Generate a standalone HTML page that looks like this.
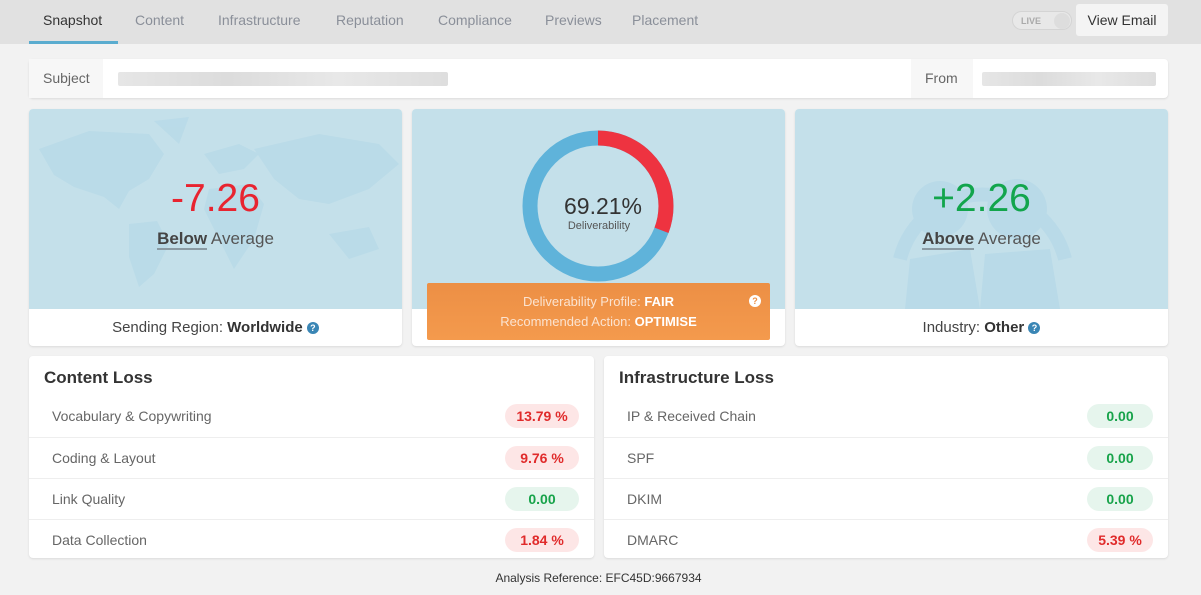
<!DOCTYPE html>
<html><head><meta charset="utf-8">
<style>
*{box-sizing:border-box;margin:0;padding:0}
body{width:1201px;height:595px;background:#f2f2f2;font-family:"Liberation Sans",sans-serif;color:#444;position:relative;overflow:hidden}
.tabs{position:absolute;left:0;top:0;width:1201px;height:44px;background:#e1e1e1}
.tab{position:absolute;top:12px;font-size:14px;color:#8a8f99}
.tab.act{color:#333}
.uline{position:absolute;left:29px;top:41px;width:89px;height:3px;background:#5aaccf}
.live{position:absolute;left:1012px;top:11px;width:60px;height:19px;border-radius:10px;background:#e8e8e8;border:1px solid #d4d4d4}
.live span{position:absolute;left:8px;top:4px;font-size:9px;color:#aaa;font-weight:bold}
.live i{position:absolute;right:1px;top:1px;width:16px;height:16px;border-radius:50%;background:#ddd}
.btn{position:absolute;left:1076px;top:4px;width:92px;height:32px;background:#f4f4f4;border-radius:3px;font-size:14px;color:#333;text-align:center;line-height:32px}
.subj{position:absolute;left:29px;top:59px;width:1139px;height:39px;background:#fff;border-radius:4px;box-shadow:0 1px 2px rgba(0,0,0,.1)}
.lbl{position:absolute;top:0;height:39px;line-height:39px;font-size:14px;color:#666;background:#f7f7f7;padding:0 14px}
.blur{position:absolute;height:14px;top:13px;background:linear-gradient(90deg,#e6e6e6,#dcdcdc,#e8e8e8,#dedede);border-radius:2px}
.card{position:absolute;top:109px;width:373px;height:237px;background:#fff;border-radius:4px;overflow:hidden;box-shadow:0 1px 2px rgba(0,0,0,.1)}
.card .top{position:absolute;left:0;top:0;width:100%;height:200px;background:#c4e0ea;overflow:hidden}
.card .bot{position:absolute;left:0;top:200px;width:100%;height:37px;text-align:center;line-height:38px;font-size:15px;color:#444}
.big{position:absolute;width:100%;top:68px;text-align:center;font-size:39px}
.avg{position:absolute;width:100%;top:120px;text-align:center;font-size:17px;color:#555}
.avg b{color:#444;border-bottom:2px solid #8a9aa3}
.q{display:inline-block;width:12px;height:12px;border-radius:50%;background:#3a86b5;color:#fff;font-size:9px;line-height:12px;text-align:center;font-weight:bold;vertical-align:1px}
.panel{position:absolute;top:356px;height:202px;background:#fff;border-radius:4px;box-shadow:0 1px 2px rgba(0,0,0,.1)}
.panel h3{position:absolute;left:15px;top:12px;font-size:17px;color:#333}
.row{position:absolute;left:0;width:100%;height:41px;border-top:1px solid #eee;font-size:14px;color:#666}
.row span{position:absolute;left:23px;top:12px}
.pill{position:absolute;right:15px;top:8px;width:74px;height:24px;border-radius:12px;text-align:center;line-height:24px;font-weight:bold;font-size:14px}
.r{background:#fde6e6;color:#e02b2b}
.g{background:#e6f5ed;color:#17a34a}
</style></head><body>
<div class="tabs">
<div class="tab act" style="left:43px">Snapshot</div>
<div class="tab" style="left:135px">Content</div>
<div class="tab" style="left:218px">Infrastructure</div>
<div class="tab" style="left:336px">Reputation</div>
<div class="tab" style="left:438px">Compliance</div>
<div class="tab" style="left:545px">Previews</div>
<div class="tab" style="left:632px">Placement</div>
<div class="uline"></div>
<div class="live"><span>LIVE</span><i></i></div>
<div class="btn">View Email</div>
</div>
<div class="subj">
<div class="lbl" style="left:0;width:74px">Subject</div>
<div class="blur" style="left:89px;width:330px"></div>
<div class="lbl" style="left:882px;width:62px">From</div>
<div class="blur" style="left:953px;width:174px"></div>
</div>

<div class="card" style="left:29px">
<div class="top">
<svg width="373" height="200" style="position:absolute;left:0;top:0" fill="#b3d7e7" opacity=".55">
<path d="M10 40 L60 22 L120 25 L135 45 L120 70 L100 82 L90 100 L75 88 L45 78 L25 66 Z"/>
<path d="M100 115 L128 112 L140 135 L125 165 L110 178 L100 148 Z"/>
<path d="M125 12 L160 8 L150 35 Z"/>
<path d="M175 45 L210 35 L230 45 L215 60 L190 65 Z"/>
<path d="M180 80 L220 75 L235 95 L225 130 L205 160 L190 130 L175 100 Z"/>
<path d="M225 40 L290 25 L350 35 L370 55 L340 80 L300 95 L270 90 L245 70 Z"/>
<path d="M300 125 L340 118 L350 140 L320 150 Z"/>
</svg>
<div class="big" style="color:#e82430">-7.26</div>
<div class="avg"><b>Below</b> Average</div>
</div>
<div class="bot">Sending Region: <b style="color:#333">Worldwide</b> <span class="q">?</span></div>
</div>

<div class="card" style="left:412px">
<div class="top" style="height:200px">
<svg width="373" height="200" style="position:absolute;left:0;top:0">
<circle cx="186" cy="97" r="68" fill="none" stroke="#5fb3da" stroke-width="15"/>
<circle cx="186" cy="97" r="68" fill="none" stroke="#ee3340" stroke-width="15" stroke-dasharray="131.6 500" transform="rotate(-90 186 97)"/>
<text x="191" y="105" text-anchor="middle" font-family="Liberation Sans" font-size="23" fill="#333">69.21%</text>
<text x="187" y="120" text-anchor="middle" font-family="Liberation Sans" font-size="11" fill="#555">Deliverability</text>
</svg>
</div>
</div>
<div style="position:absolute;left:427px;top:283px;width:343px;height:57px;background:linear-gradient(#ec8f45,#f49a4d);border-radius:2px;color:#fbe3d0;font-size:13px;text-align:center;line-height:20px;padding-top:9px">
Deliverability Profile: <b style="color:#fff">FAIR</b><br>Recommended Action: <b style="color:#fff">OPTIMISE</b>
<span style="position:absolute;right:9px;top:12px;width:12px;height:12px;border-radius:50%;background:#fff;color:#ec8f45;font-size:9px;line-height:12px;font-weight:bold">?</span>
</div>

<div class="card" style="left:795px">
<div class="top">
<svg width="373" height="200" style="position:absolute;left:0;top:0" fill="none" stroke="#b3d7e7" stroke-width="14" opacity=".6">
<path d="M105 150 A85 85 0 0 1 270 150"/>
<circle cx="145" cy="100" r="28" fill="#b3d7e7" stroke="none"/>
<circle cx="222" cy="100" r="30" fill="#b3d7e7" stroke="none"/>
<path d="M110 200 L115 150 L175 140 L185 200 Z" fill="#b3d7e7" stroke="none"/>
<path d="M185 200 L190 145 L255 140 L265 200 Z" fill="#b3d7e7" stroke="none"/>
</svg>
<div class="big" style="color:#12a54c">+2.26</div>
<div class="avg"><b>Above</b> Average</div>
</div>
<div class="bot">Industry: <b style="color:#333">Other</b> <span class="q">?</span></div>
</div>

<div class="panel" style="left:29px;width:565px">
<h3>Content Loss</h3>
<div class="row" style="top:40px;border-top:none"><span>Vocabulary &amp; Copywriting</span><div class="pill r">13.79 %</div></div>
<div class="row" style="top:81px"><span>Coding &amp; Layout</span><div class="pill r">9.76 %</div></div>
<div class="row" style="top:122px"><span>Link Quality</span><div class="pill g">0.00</div></div>
<div class="row" style="top:163px"><span>Data Collection</span><div class="pill r">1.84 %</div></div>
</div>
<div class="panel" style="left:604px;width:564px">
<h3>Infrastructure Loss</h3>
<div class="row" style="top:40px;border-top:none"><span>IP &amp; Received Chain</span><div class="pill g" style="width:66px">0.00</div></div>
<div class="row" style="top:81px"><span>SPF</span><div class="pill g" style="width:66px">0.00</div></div>
<div class="row" style="top:122px"><span>DKIM</span><div class="pill g" style="width:66px">0.00</div></div>
<div class="row" style="top:163px"><span>DMARC</span><div class="pill r" style="width:66px">5.39 %</div></div>
</div>
<div style="position:absolute;left:0;width:1197px;top:571px;text-align:center;font-size:12px;color:#333">Analysis Reference: EFC45D:9667934</div>
</body></html>
